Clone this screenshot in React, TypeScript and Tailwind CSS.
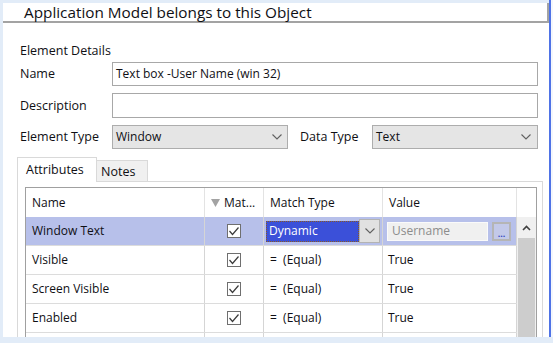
import React from "react";

const Chevron = ({ className = "" }: { className?: string }) => (
  <svg width="10" height="6" viewBox="0 0 10 6" className={className}>
    <polyline points="0.5,0.5 5,5 9.5,0.5" fill="none" stroke="#606060" strokeWidth="1.1" />
  </svg>
);

const Check = () => (
  <div className="w-[14px] h-[14px] border border-[#6f6f6f] bg-white flex items-center justify-center">
    <svg width="12" height="12" viewBox="0 0 12 12">
      <polyline points="1.5,6 4.5,9.5 10.5,2.5" fill="none" stroke="#3a3a3a" strokeWidth="1.2" />
    </svg>
  </div>
);

const rows = [
  { name: "Visible", value: "True" },
  { name: "Screen Visible", value: "True" },
  { name: "Enabled", value: "True" },
  { name: "", value: "" },
];

export default function App() {
  return (
    <div className="w-[553px] h-[343px] bg-[#e2ecf8] flex overflow-hidden font-['Open_Sans',sans-serif] text-[12px] leading-[16px] text-[#0f0f14]">
      <div className="w-[3px] shrink-0" />
      <div className="w-[546px] shrink-0 flex flex-col pt-[3px] pb-[6px]">
        <div className="flex-1 bg-white flex flex-col overflow-hidden">
          {/* header */}
          <div className="h-[20px] shrink-0 border-b-2 border-r-2 border-[#a3a3a3] pl-[21px] text-[15.3px] leading-[18px] flex items-center">
            Application Model belongs to this Object
          </div>
          {/* form */}
          <div className="pl-[17px] flex flex-col flex-1 overflow-hidden">
            <div className="mt-[20px] h-[16px] text-[12.5px]">Element Details</div>
            <div className="mt-[3px] h-[24px] flex items-center">
              <div className="w-[92px] text-[12.5px]">Name</div>
              <div className="w-[426px] h-full border border-[#a8a8a8] flex items-center pl-[3px]">
                Text box -User Name (win 32)
              </div>
            </div>
            <div className="mt-[7px] h-[25px] flex items-center">
              <div className="w-[92px] text-[12.5px]">Description</div>
              <div className="w-[426px] h-full border border-[#a8a8a8]" />
            </div>
            <div className="mt-[7px] h-[24px] flex items-center">
              <div className="w-[92px] text-[12.5px]">Element Type</div>
              <div className="w-[176px] h-full border border-[#adadad] bg-[#e5e5e5] flex items-center pl-[3px] pr-[5px] justify-between">
                <span>Window</span>
                <Chevron />
              </div>
              <div className="ml-[12px] w-[72px] text-[12.5px]">Data Type</div>
              <div className="w-[166px] h-full border border-[#adadad] bg-[#e5e5e5] flex items-center pl-[3px] pr-[6px] justify-between">
                <span>Text</span>
                <Chevron />
              </div>
            </div>
            {/* tabs */}
            <div className="mt-[8px] ml-[-3px] h-[24px] flex items-end shrink-0">
              <div className="relative z-10 w-[80px] h-[25px] mb-[-1px] border-t border-l border-r border-[#d9d9d9] bg-white pl-[8px] flex items-center text-[12.5px]">
                Attributes
              </div>
              <div className="w-[51px] h-[21px] border-t border-r border-[#d9d9d9] bg-[#f0f0f0] pl-[4px] flex items-center pt-[2px] text-[12.5px]">
                Notes
              </div>
            </div>
            <div className="ml-[-3px] w-[526px] flex-1 border-t border-l border-r border-[#d9d9d9] pt-[5px] pl-[7px] overflow-hidden">
              <div className="w-[512px] border-t border-l border-r border-[#a0a0a0] h-[200px]">
                {/* header row */}
                <div className="flex h-[29px]">
                  <div className="w-[179px] border-r border-[#e3e3e3] pl-[6px] flex items-center">Name</div>
                  <div className="w-[59px] border-r border-[#e3e3e3] pl-[6px] flex items-center gap-[4px]">
                    <svg width="9" height="8" viewBox="0 0 9 8">
                      <polygon points="0,0 9,0 4.5,8" fill="#a3a3a3" />
                    </svg>
                    <span>Mat...</span>
                  </div>
                  <div className="w-[119px] border-r border-[#e3e3e3] pl-[6px] flex items-center">Match Type</div>
                  <div className="w-[134px] border-r border-[#e3e3e3] pl-[6px] flex items-center">Value</div>
                  <div className="w-[19px]" />
                </div>
                {/* body */}
                <div className="flex">
                  <div className="w-[491px]">
                    <div className="flex h-[29px] border-b border-[#dcdcdc] bg-[#b7c0ea]">
                      <div className="w-[179px] border-r border-[#d5d5d5] pl-[6px] flex items-center">Window Text</div>
                      <div className="w-[59px] border-r border-[#d5d5d5] flex items-center justify-center">
                        <Check />
                      </div>
                      <div className="w-[119px] border-r border-[#d5d5d5] flex items-center pl-[2px]">
                        <div className="w-[93px] h-[21px] bg-[#3b50d9] border border-dotted border-[#8a5a20] text-white pl-[2px] flex items-center">
                          Dynamic
                        </div>
                        <div className="w-[21px] h-[24px] bg-[#e1e1e1] border border-[#b3b3b3] flex items-center justify-center">
                          <Chevron />
                        </div>
                      </div>
                      <div className="w-[134px] border-r border-[#d5d5d5] flex items-center pl-[4px]">
                        <div className="w-[101px] h-[19px] bg-[#f0f0f0] border border-[#fafafa] text-[#8c8c8c] pl-[4px] flex items-center">
                          Username
                        </div>
                        <div className="ml-[4px] w-[19px] h-[19px] border-2 border-[#b5b5b5] bg-[#c3c9e9] flex items-end justify-center text-[9px] leading-[10px] text-[#3448c0] font-bold">
                          ...
                        </div>
                      </div>
                    </div>
                    {rows.map((r, i) => (
                      <div key={i} className="flex h-[29px] border-b border-[#dcdcdc]">
                        <div className="w-[179px] border-r border-[#d5d5d5] pl-[6px] flex items-center">{r.name}</div>
                        <div className="w-[59px] border-r border-[#d5d5d5] flex items-center justify-center">
                          {r.name && <Check />}
                        </div>
                        <div className="w-[119px] border-r border-[#d5d5d5] pl-[6px] flex items-center whitespace-pre">
                          {r.name ? "=  (Equal)" : ""}
                        </div>
                        <div className="w-[134px] border-r border-[#d5d5d5] pl-[5px] flex items-center">{r.value}</div>
                      </div>
                    ))}
                  </div>
                  {/* scrollbar */}
                  <div className="w-[19px] flex flex-col bg-[#f0f0f0] h-[140px]">
                    <div className="h-[21px] flex items-center justify-center">
                      <svg width="9" height="6" viewBox="0 0 9 6">
                        <polyline points="1,5 4.5,1.5 8,5" fill="none" stroke="#404040" strokeWidth="1.6" />
                      </svg>
                    </div>
                    <div className="flex-1 mx-[1px] bg-[#cdcdcd]" />
                  </div>
                </div>
              </div>
            </div>
          </div>
        </div>
      </div>
      <div className="w-[2px] shrink-0 bg-[#4f73e6] mb-[6px]" />
      <div className="w-[2px] shrink-0 bg-[#f4f7fc] mb-[6px]" />
    </div>
  );
}
